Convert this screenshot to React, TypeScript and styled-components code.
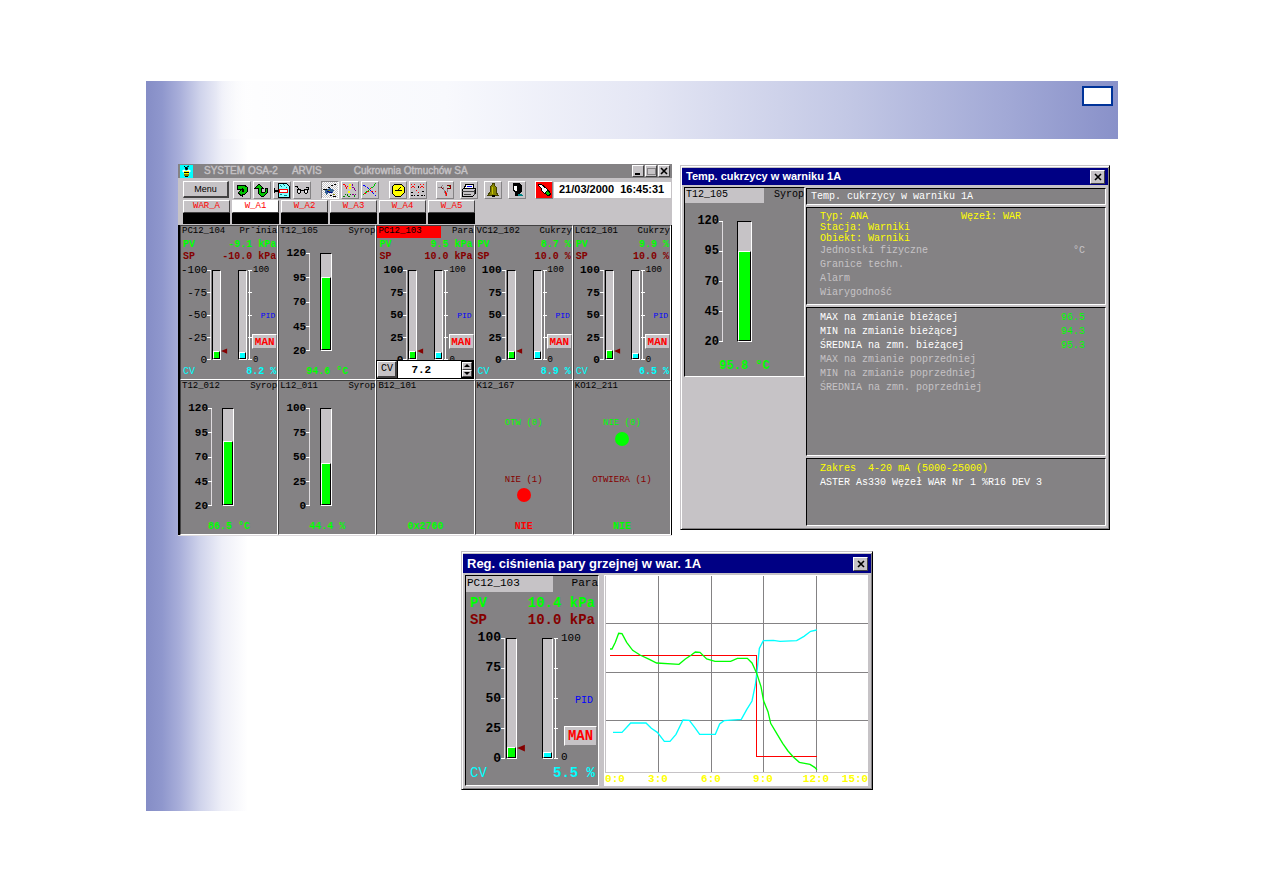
import React from "react";
import styled, { createGlobalStyle, css } from "styled-components";

const silver = "#c6c3c6";
const gray = "#848284";
const dark = "#424142";
const lime = "#00ff00";
const cyan = "#00ffff";
const maroon = "#840000";
const navy = "#000084";

const mono = '"Liberation Mono", "DejaVu Sans Mono", monospace';
const sans = '"Liberation Sans", Arial, sans-serif';

const GlobalStyle = createGlobalStyle`
  *, *::before, *::after { box-sizing: border-box; }
  body { margin: 0; background: #fff; font-family: ${mono}; }
  button, input { margin: 0; font: inherit; }
  h1, h2, h3, p, ul { margin: 0; padding: 0; font: inherit; }
  svg { display: block; flex: none; }
`;

/* ---------- slide ---------- */

const Page = styled.main`
  min-height: 100vh;
  padding: 81px 145px 82px 146px;
`;

const Slide = styled.section`
  display: flex;
  flex-direction: column;
  min-height: 730px;
  background: linear-gradient(
      90deg,
      #858dc6 0,
      #8f97cd 16px,
      #a9afda 34px,
      #cfd3eb 54px,
      #eeeff8 76px,
      #fff 102px
    )
    no-repeat;
`;

const Banner = styled.header`
  display: flex;
  justify-content: flex-end;
  height: 58px;
  padding: 5px 5px 0 0;
  background: linear-gradient(
    90deg,
    rgba(253, 253, 254, 0) 0,
    rgba(253, 253, 254, 0) 70px,
    #fdfdfe 110px,
    #f8f9fd 300px,
    #e4e6f4 500px,
    #c3c8e5 700px,
    #a2a9d6 860px,
    #8991c9 100%
  );
`;

const PageNumber = styled.div`
  width: 31px;
  height: 20px;
  border: 2px solid #003399;
  background: #fff;
`;

const Content = styled.div`
  display: flex;
  flex-direction: column;
  gap: 15px;
  padding: 25px 8px 21px 32px;
`;

const TopRow = styled.div`
  display: grid;
  grid-template-columns: minmax(0, 494fr) minmax(0, 430fr);
  align-items: start;
  gap: 8px;
`;

/* ---------- buttons ---------- */

const raised = css`
  border: 1px solid;
  border-color: #fff ${dark} ${dark} #fff;
  background: ${silver};
`;

const CaptionButton = styled.button`
  ${raised}
  display: flex;
  align-items: center;
  justify-content: center;
  width: ${(p: { $wide?: boolean }) => (p.$wide ? 15 : 12)}px;
  height: ${(p: { $wide?: boolean }) => (p.$wide ? 14 : 12)}px;
  padding: 0;
`;

const Cross = ({ size = 8 }: { size?: number }) => (
  <svg width={size} height={size} viewBox="0 0 8 8">
    <path d="M1 1l6 6M7 1l-6 6" stroke="#000" strokeWidth="1.6" />
  </svg>
);

/* ---------- main window ---------- */

const MainWindow = styled.section`
  min-width: 0;
  background: ${silver};
  border-bottom: 1px solid #dedbde;
`;

const MainTitle = styled.div`
  display: flex;
  align-items: center;
  height: 14px;
  padding: 0 2px 0 2px;
  background: ${gray};
  color: ${silver};
  font: 10px/14px ${sans};
`;

const TitlePart = styled.span`
  margin-left: ${(p: { $gap: number }) => p.$gap}px;
  -webkit-text-stroke: 0.4px ${silver};
  white-space: nowrap;
`;

const CaptionButtons = styled.div`
  display: flex;
  gap: 1px;
  margin-left: auto;
`;

const Toolbar = styled.div`
  display: flex;
  align-items: center;
  height: 22px;
  padding: 1px 1px 0 5px;
`;

const ToolGroup = styled.div`
  display: flex;
  gap: ${(p: { $gap?: number; $after?: number }) => p.$gap ?? 2}px;
  margin-right: ${(p) => p.$after ?? 10}px;
`;

const MenuButton = styled.button`
  ${raised}
  width: 46px;
  height: 17px;
  margin-right: 4px;
  padding: 0;
  border-width: 1px 2px 2px 1px;
  font: 9px/13px ${sans};
`;

const ToolButton = styled.button`
  ${raised}
  display: flex;
  align-items: center;
  justify-content: center;
  width: 18px;
  height: 18px;
  padding: 0;
  border-color: #fff ${gray} ${gray} #fff;
  ${(p: { $on?: boolean; $red?: boolean }) =>
    p.$on && `background: repeating-conic-gradient(#fff 0 25%, ${silver} 0 50%) 0 0 / 2px 2px; border-color: ${gray} #fff #fff ${gray};`}
  ${(p) => p.$red && `background: #ff0000;`}
`;

const Clock = styled.time`
  flex: 1;
  height: 16px;
  padding-left: 5px;
  background: #fff;
  color: #000;
  font: bold 11px/15px ${sans};
  white-space: pre;
`;

const Tabs = styled.nav`
  display: flex;
  gap: 2px;
  height: 25px;
  padding: 0 0 1px 5px;
`;

const Tab = styled.button`
  display: flex;
  flex-direction: column;
  width: 47px;
  padding: 0;
  border: 0;
  background: #000;
  color: #ff0000;
  font: 9px/12px ${mono};
`;

const TabLabel = styled.span`
  ${raised}
  width: 100%;
  height: 13px;
  line-height: 11px;
  ${(p: { $on?: boolean }) => p.$on && `background: #fff;`}
`;

const CellGrid = styled.div`
  display: grid;
  grid-template-columns: repeat(5, 1fr);
  grid-auto-rows: 155px;
  border: solid #000;
  border-width: 0 1px 0 2px;
`;

const Cell = styled.article`
  position: relative;
  min-width: 0;
  border: 1px solid;
  border-color: ${dark} #fff #fff ${dark};
  background: ${gray};
`;

/* ---------- instrument faceplates ---------- */

type Size = "s" | "m" | "l";
const dims = {
  s: { H: 90, head: 12, headFont: 9, row: 12, value: 10, scale: 11, labelW: 26, tube: 9, mid: 17 },
  m: { H: 120, head: 15, headFont: 10, row: 15, value: 12, scale: 12, labelW: 35, tube: 14, mid: 0 },
  l: { H: 121, head: 16, headFont: 11, row: 17, value: 14, scale: 13, labelW: 35, tube: 11, mid: 25 },
};

const Head = styled.h3<{ $size: Size }>`
  display: flex;
  justify-content: space-between;
  height: ${(p) => dims[p.$size].head}px;
  font: ${(p) => `${dims[p.$size].headFont}px/${dims[p.$size].head - 1}px ${mono}`};
  white-space: nowrap;
`;

const Tag = styled.span<{ $bg?: string }>`
  width: 66%;
  padding-left: 1px;
  background: ${(p) => p.$bg ?? "transparent"};
`;

const Values = styled.div<{ $size: Size }>`
  padding-top: ${(p) => (p.$size === "l" ? 3 : 1)}px;
`;

const ValueRow = styled.p<{ $size: Size; $color: string }>`
  display: flex;
  justify-content: space-between;
  padding: 0 ${(p) => (p.$size === "l" ? 3 : 1)}px 0 ${(p) => (p.$size === "l" ? 4 : 2)}px;
  color: ${(p) => p.$color};
  font: ${(p) => `bold ${dims[p.$size].value}px/${dims[p.$size].row}px ${mono}`};
  white-space: pre;
`;

const PlainLabel = styled.span`
  font-weight: normal;
`;

const GaugeBody = styled.div<{ $h: number; $top: number }>`
  display: flex;
  height: ${(p) => p.$h + 12}px;
  margin-top: ${(p) => p.$top}px;
`;

const Scale = styled.ul<{ $w: number; $font: number; $thin?: boolean }>`
  display: flex;
  flex-direction: column;
  justify-content: space-between;
  width: ${(p) => p.$w}px;
  list-style: none;
  text-align: right;
  font: ${(p) => `${p.$thin ? "normal" : "bold"} ${p.$font}px/12px ${mono}`};
  white-space: nowrap;
`;

const Tube = styled.div<{ $w: number; $h: number }>`
  display: flex;
  align-items: flex-end;
  flex: none;
  width: ${(p) => p.$w}px;
  height: ${(p) => p.$h}px;
  margin-top: 6px;
  border: 1px solid;
  border-color: #000 #fff #fff #000;
  background: ${silver};
`;

const Fill = styled.div<{ $color: string }>`
  width: 100%;
  border: 1px solid;
  border-color: #fff #000 #000 #fff;
  background: ${(p) => p.$color};
`;

const Ticks = ({ h, right }: { h: number; right?: boolean }) => (
  <svg width="5" height={h + 12} viewBox={`0 0 5 ${h + 12}`} shapeRendering="crispEdges">
    <path d={`M${right ? 2 : 3} 6v${h}`} stroke={right ? "#fff" : "#dedbde"} strokeWidth="1" transform="translate(.5 0)" />
    {[0, 1, 2, 3, 4].map((i) => (
      <rect key={i} x={right ? 1 : 0} y={6 + Math.round((i * (h - 1)) / 4)} width="4" height="1" fill="#fff" />
    ))}
  </svg>
);

const Middle = styled.div<{ $w: number; $h: number }>`
  display: flex;
  align-items: flex-end;
  width: ${(p) => p.$w}px;
  height: ${(p) => p.$h + 6}px;
  padding-bottom: ${(p) => (p.$h > 100 ? 7 : 6)}px;
`;

const RightSide = styled.div<{ $size: Size }>`
  display: flex;
  flex-direction: column;
  flex: 1;
  font: ${(p) => `${p.$size === "l" ? 11 : 9}px/12px ${mono}`};
`;

const RightLabel = styled.span`
  padding-left: ${(p: { $size: Size }) => (p.$size === "l" ? 3 : 1)}px;
`;

const Mode = styled.span<{ $size: Size }>`
  align-self: flex-end;
  margin-top: ${(p) => (p.$size === "l" ? 51 : 34)}px;
  margin-right: ${(p) => (p.$size === "l" ? 5 : 2)}px;
  color: #0000ff;
  font-size: ${(p) => (p.$size === "l" ? 10 : 8)}px;
`;

const ManButton = styled.button<{ $size: Size }>`
  ${raised}
  align-self: flex-end;
  width: ${(p) => (p.$size === "l" ? 33 : 25)}px;
  height: ${(p) => (p.$size === "l" ? 20 : 15)}px;
  margin: ${(p) => (p.$size === "l" ? "19px 1px 5px 0" : "12px 0 5px 0")};
  padding: 0;
  border-color: #fff ${gray} ${gray} #fff;
  color: #ff0000;
  font: bold ${(p) => (p.$size === "l" ? "14px/16px" : "11px/12px")} ${mono};
`;

type LoopProps = {
  size: Size;
  tag: string;
  name: string;
  bg?: string;
  unit: string;
  pv: string;
  sp: string;
  cv?: string;
  scale?: string[];
  pvFill: number;
  cvFill: number;
};

const percent = ["100", "75", "50", "25", "0"];

function Loop({ size, tag, name, bg, unit, pv, sp, cv, scale = percent, pvFill, cvFill }: LoopProps) {
  const d = dims[size];
  const big = size === "l";
  return (
    <>
      <Head $size={size}>
        <Tag $bg={bg}>{tag}</Tag>
        <span>{name}</span>
      </Head>
      <Values $size={size}>
        <ValueRow $size={size} $color={lime}>
          <span>PV</span>
          <span>{`${pv} ${unit}`}</span>
        </ValueRow>
        <ValueRow $size={size} $color={maroon}>
          <span>SP</span>
          <span>{`${sp} ${unit}`}</span>
        </ValueRow>
      </Values>
      <GaugeBody $h={d.H} $top={big ? 3 : 1}>
        <Scale $w={d.labelW} $font={d.scale} $thin={scale !== percent}>
          {scale.map((s) => (
            <li key={s}>{s}</li>
          ))}
        </Scale>
        <Ticks h={d.H} />
        <Tube $w={d.tube} $h={d.H}>
          <Fill $color={lime} style={{ height: `${pvFill}%` }} />
        </Tube>
        <Middle $w={d.mid} $h={d.H}>
          <svg width={big ? 9 : 7} height={big ? 8 : 6} viewBox="0 0 8 6">
            <path d="M0 3l7-3v6z" fill={maroon} />
          </svg>
        </Middle>
        <Tube $w={d.tube} $h={d.H}>
          <Fill $color={cyan} style={{ height: `${cvFill}%` }} />
        </Tube>
        <Ticks h={d.H} right />
        <RightSide $size={size}>
          <RightLabel $size={size}>100</RightLabel>
          <Mode $size={size}>PID</Mode>
          <ManButton $size={size}>MAN</ManButton>
          <RightLabel $size={size}>0</RightLabel>
        </RightSide>
      </GaugeBody>
      {cv && (
        <ValueRow $size={size} $color={cyan}>
          <PlainLabel>CV</PlainLabel>
          <span>{`${cv} %`}</span>
        </ValueRow>
      )}
    </>
  );
}

const Reading = styled.p<{ $size: Size; $color?: string }>`
  color: ${(p) => p.$color ?? lime};
  font: ${(p) => `bold ${p.$size === "m" ? 12 : 10}px/12px ${mono}`};
  text-align: center;
  white-space: pre;
`;

const SensorGauge = styled(GaugeBody)`
  margin-bottom: ${(p) => (p.$h > 100 ? 12 : 9)}px;
`;

const TubeSlot = styled.div`
  padding-left: ${(p: { $size: Size }) => (p.$size === "m" ? 13 : 9)}px;
`;

type SensorProps = { size: Size; tag: string; name: string; bg?: string; scale: string[]; value: string; fill: number };

function Sensor({ size, tag, name, bg, scale, value, fill }: SensorProps) {
  const big = size === "m";
  const h = big ? 121 : 98;
  return (
    <>
      <Head $size={size}>
        <Tag $bg={bg}>{tag}</Tag>
        <span>{name}</span>
      </Head>
      <SensorGauge $h={h} $top={big ? 12 : 9}>
        <Scale $w={big ? 34 : 27} $font={big ? 12 : 11}>
          {scale.map((s) => (
            <li key={s}>{s}</li>
          ))}
        </Scale>
        <Ticks h={h} />
        <TubeSlot $size={size}>
          <Tube $w={big ? 15 : 12} $h={h}>
            <Fill $color={lime} style={{ height: `${fill}%` }} />
          </Tube>
        </TubeSlot>
      </SensorGauge>
      <Reading $size={size}>{value}</Reading>
    </>
  );
}

/* ---------- two-state signals ---------- */

const StateStack = styled.div`
  display: flex;
  flex-direction: column;
  align-items: center;
  padding-top: 24px;
  font: 9px/12px ${mono};
`;

const StateSlot = styled.div<{ $color: string; $h: number }>`
  height: ${(p) => p.$h}px;
  color: ${(p) => p.$color};
`;

const Lamp = styled.div<{ $color: string; $gap: number }>`
  width: 14px;
  height: 14px;
  margin: ${(p) => p.$gap}px auto 0;
  border-radius: 50%;
  background: ${(p) => p.$color};
`;

const CvEditor = styled.div`
  position: absolute;
  left: -1px;
  right: 0;
  bottom: 0;
  display: flex;
  height: 19px;
  border: 1px solid #000;
  background: #fff;
`;

const CvButton = styled.button`
  ${raised}
  width: 20px;
  padding: 0;
  border-width: 1px 2px 2px 1px;
  font: 10px/12px ${mono};
`;

const CvInput = styled.input`
  flex: 1;
  min-width: 0;
  padding: 0 0 0 13px;
  border: 0;
  border-left: 1px solid #000;
  font: bold 11px/14px ${mono};
`;

const Spinner = styled.div`
  display: flex;
  flex-direction: column;
  width: 12px;
  border: 1px solid #000;
`;

const SpinButton = styled.button`
  ${raised}
  display: flex;
  align-items: center;
  justify-content: center;
  flex: 1;
  padding: 0;
`;

/* ---------- toolbar icons ---------- */

const Icon = ({ children }: { children: React.ReactNode }) => (
  <svg width="16" height="16" viewBox="0 0 16 16" fill="none" shapeRendering="crispEdges">
    {children}
  </svg>
);

const BeeIcon = () => (
  <svg width="13" height="13" viewBox="0 0 13 13">
    <rect width="13" height="13" fill={cyan} />
    <path d="M4 1l2 2M9 1L7 2" stroke="#000" strokeWidth="1" />
    <path d="M2 6q2-3 4 0q3-3 5 0l-2 2H4z" fill="#fff" />
    <circle cx="6.500" cy="3.500" r="1.500" fill="#000" />
    <rect x="4" y="6" width="5" height="5" fill="#ffff00" />
    <path d="M4 7.500h5M4 10h5M5 11.500h3" stroke="#000" />
  </svg>
);

const BackIcon = () => (
  <Icon>
    <path d="M3 3h7l3 2v5l-2 2H8v2l-4-3 4-4v2h1V7H3z" fill="#00c300" stroke="#000" />
  </Icon>
);
const UpIcon = () => (
  <Icon>
    <path d="M5 2l4 4H7v4l2 1 2-1V6h2v5l-3 3H7l-3-3V6H1z" fill="#00c300" stroke="#000" />
  </Icon>
);
const ScreenIcon = () => (
  <Icon>
    <path d="M4 1h8l3 3v11H4z" fill="#84ffff" stroke="#000" />
    <path d="M6 3l2 2M9 2l2 2M6 12h2M10 13h3M12 5v1" stroke="#008284" />
    <rect x="5" y="7" width="8" height="3" fill="#fff" stroke="#ff0000" />
    <path d="M0 6v5M0 8.500h4" stroke="#000" strokeWidth="2" />
  </Icon>
);
const GlassesIcon = () => (
  <Icon>
    <path d="M1 4h2l2 4M3 7h3l1 2-1 2H4L3 9zM10 7h3l1 2-1 2h-2l-1-2zM7 8h3M12 5h2v3" stroke="#000" />
    <path d="M4 9h2v1H4zM11 9h2v1h-2z" fill="#fff" />
  </Icon>
);
const BirdIcon = () => (
  <Icon>
    <path d="M3 8l5-2 4 2-1 3H7L4 13z" fill="#316194" />
    <path d="M1 7h4M6 5h2M9 3h2M12 2h2M8 13h2M11 14h3" stroke="#000" />
    <path d="M6 8h2M11 12h2" stroke="#848200" />
    <path d="M7 10h3M5 9h2" stroke={navy} />
  </Icon>
);
const CurvesIcon = () => (
  <Icon>
    <path d="M1 2h2v2h1v2h2M5 4h1" stroke="#ff0000" strokeDasharray="2 1" />
    <path d="M1 14h2v-2h2v2h3v-2h4v2h2" stroke="#008200" strokeDasharray="2 1" />
    <path d="M8 2v5M7 9v3" stroke="#ffff00" strokeWidth="2" strokeDasharray="2 1" />
    <path d="M10 2v3h2v3h2M10 12h4" stroke="#840084" strokeDasharray="2 1" />
  </Icon>
);
const CrossCurvesIcon = () => (
  <Icon>
    <path d="M1 3l4 2 4 4 5 5" stroke="#0000ff" strokeDasharray="3 1" />
    <path d="M14 1l-3 4-4 3-6 5" stroke="#00c300" strokeDasharray="3 1" />
    <path d="M2 12l5-3 7 1M8 6l3 3" stroke="#ff0000" strokeDasharray="2 2" />
  </Icon>
);
const ClockIcon = () => (
  <Icon>
    <path d="M5 2h6l3 3v6l-3 3H5l-3-3V5z" fill="#ffff00" stroke="#000" />
    <path d="M8 8l3-3M5 8h7" stroke="#000" />
  </Icon>
);
const PointsIcon = () => (
  <Icon>
    <path d="M1 2l4 4M5 2L1 6M10 2l4 4M14 2l-4 4M6 8l3 3" stroke="#ff0000" strokeDasharray="2 1" />
    <path d="M1 10h3M1 13h4M8 4v2M7 13h3M12 9h2M11 13h4" stroke="#000" strokeDasharray="2 1" />
  </Icon>
);
const ToolsIcon = () => (
  <Icon>
    <path d="M1 5h3l2-2M6 5l3 9 2-8" stroke="#848284" />
    <path d="M8 9l2 5" stroke="#ff0000" />
    <path d="M10 3h3v3h-3M4 5l2 2" stroke="#840000" />
    <path d="M12 4h1" stroke="#00c300" />
  </Icon>
);
const PrinterIcon = () => (
  <Icon>
    <path d="M5 2h8l-1 5H3z" fill="#fff" stroke="#000" />
    <path d="M6 4h5M6 6h4" stroke="#0000ff" />
    <path d="M1 8l2-2h11v6l-2 2H1z" fill="#c6c3c6" stroke="#000" />
    <path d="M1 9h12M3 12h7M13 8v5" stroke="#424142" />
  </Icon>
);
const BellIcon = () => (
  <Icon>
    <path d="M7 1h2v2l2 2v5l2 3H3l2-3V5l2-2z" fill="#848200" stroke="#424100" />
    <path d="M7 5v7" stroke="#c6c300" />
    <path d="M7 14h3" stroke="#000" strokeWidth="2" />
  </Icon>
);
const UserIcon = () => (
  <Icon>
    <path d="M4 1h7l2 3v5l-2 2v3H6v-3L4 9z" fill="#000" />
    <path d="M5 4h3v5H6L5 7z" fill="#fff" />
    <path d="M9 12h3l2 2H9z" fill="#008284" />
  </Icon>
);
const HandIcon = () => (
  <Icon>
    <path d="M2 3l3-1 6 5 2 3-4 2-3-3-1-3z" fill="#fff" stroke="#000" />
    <path d="M9 11l3-3 3 4-3 2z" fill="#00c300" stroke="#000" />
  </Icon>
);

/* ---------- dialogs ---------- */

const Dialog = styled.section<{ $info?: boolean }>`
  ${(p) => (p.$info ? "min-width: 0; margin-top: 1px;" : "width: 412px; margin-left: 283px;")}
  padding: 2px 1px 1px;
  border: 1px solid;
  border-color: ${silver} #000 #000 ${silver};
  background: ${silver};
  box-shadow: inset 1px 1px #fff, inset -1px -1px ${gray};
`;

const DialogTitle = styled.div<{ $tall?: boolean }>`
  display: flex;
  align-items: center;
  justify-content: space-between;
  height: ${(p) => (p.$tall ? 19 : 17)}px;
  margin: 0 0 2px;
  padding: 0 3px 0 4px;
  background: ${navy};
  color: #fff;
  font: bold ${(p) => (p.$tall ? 13 : 11)}px/17px ${sans};
`;

const InfoBody = styled.div`
  display: grid;
  grid-template-columns: 121px 1fr;
  gap: 1px;
  align-items: start;
  padding: 0 2px 2px;
`;

const sunken = css`
  border: 1px solid;
  border-color: #000 #fff #fff #000;
  background: ${gray};
`;

const SidePanel = styled.article<{ $h: number }>`
  ${sunken}
  height: ${(p) => p.$h}px;
`;

const InfoStack = styled.div`
  display: flex;
  flex-direction: column;
  gap: 2px;
  padding-top: 1px;
  color: #fff;
  font: 10px/14px ${mono};
`;

const Box = styled.div<{ $h: number }>`
  ${sunken}
  height: ${(p) => p.$h}px;
  padding: ${(p) => (p.$h < 20 ? "1px 4px" : "3px 20px 0 13px")};
`;

const Line = styled.p<{ $color?: string; $lh?: number }>`
  display: flex;
  justify-content: space-between;
  color: ${(p) => p.$color ?? "#fff"};
  line-height: ${(p) => p.$lh ?? 14}px;
  white-space: pre;
`;

const NodeName = styled.span`
  flex: 0 0 124px;
`;

const Green = styled.span`
  color: ${lime};
`;

const TrendBody = styled.div`
  display: grid;
  grid-template-columns: 134px 1fr;
  gap: 4px;
  padding: 0 3px 2px 2px;
`;

const TrendPlot = styled.div`
  height: 211px;
  overflow: hidden;
  background: #fff;
  border-left: 1px solid ${silver};
`;

const TimeLabel = styled.text`
  fill: #ffff00;
  font: bold 11px ${mono};
  text-anchor: middle;
`;

const times: [number, string][] = [
  [11, "0:0"],
  [54, "3:0"],
  [107, "6:0"],
  [159, "9:0"],
  [212, "12:0"],
  [251, "15:0"],
];

const Trend = () => (
  <svg width="265" height="211" viewBox="0 0 265 211" fill="none">
    <g shapeRendering="crispEdges" stroke={gray}>
      <path d="M54 0v197M107 0v197M159 0v197M212 0v197M1 48h264M1 97h264M1 145h264" transform="translate(.5 .5)" />
      <path d="M1 197h264M1 0v197" stroke={silver} transform="translate(.5 .5)" />
    </g>
    <path d="M6 80.500H152.500V181.500H213" stroke="#ff0000" shapeRendering="crispEdges" />
    <g transform="scale(.33333) translate(-12 -90)" strokeWidth="4">
      <path
        stroke={cyan}
        d="M39 562H66L92 534H138L154 550L172 562L193 589H210L228 568L249 525L268 526L284 547L299 568H346L359 537L372 527L424 523L440 494L456 468L466 420L472 370L478 310L490 287L520 286L540 289L590 287L612 274L632 259L650 255"
      />
      <path
        stroke={lime}
        d="M30 312H36L46 292L56 265L66 266L80 292L98 316L120 330L148 343L170 354L237 358L256 342L274 330L286 321L300 322L320 342L345 349H392L412 340H442L456 354L470 385L483 425L491 468L504 500L512 535L530 565L548 595L564 618L580 636L598 652L630 658L644 667L651 674"
      />
    </g>
    {times.map(([x, label]) => (
      <TimeLabel key={label} x={x} y="207">
        {label}
      </TimeLabel>
    ))}
  </svg>
);

const tabs = ["WAR_A", "W_A1", "W_A2", "W_A3", "W_A4", "W_A5"];
const temp = ["120", "95", "70", "45", "20"];

export default function App() {
  return (
    <>
      <GlobalStyle />
      <Page>
        <Slide>
          <Banner>
            <PageNumber />
          </Banner>
          <Content>
            <TopRow>
              <MainWindow>
                <MainTitle>
                  <BeeIcon />
                  <TitlePart $gap={11}>SYSTEM OSA-2</TitlePart>
                  <TitlePart $gap={14}>ARVIS</TitlePart>
                  <TitlePart $gap={32}>Cukrownia Otmuchów SA</TitlePart>
                  <CaptionButtons>
                    <CaptionButton aria-label="Minimize">
                      <svg width="8" height="8" viewBox="0 0 8 8">
                        <path d="M1 7h5" stroke="#000" strokeWidth="2" />
                      </svg>
                    </CaptionButton>
                    <CaptionButton aria-label="Maximize">
                      <svg width="9" height="8" viewBox="0 0 9 8" fill="none" shapeRendering="crispEdges">
                        <path d="M0 1.500h8M.5 1v7M8.500 1v7M0 7.500h9" stroke={gray} />
                      </svg>
                    </CaptionButton>
                    <CaptionButton aria-label="Close">
                      <Cross />
                    </CaptionButton>
                  </CaptionButtons>
                </MainTitle>
                <Toolbar>
                  <MenuButton>Menu</MenuButton>
                  <ToolGroup>
                    <ToolButton aria-label="Back"><BackIcon /></ToolButton>
                    <ToolButton aria-label="Up"><UpIcon /></ToolButton>
                    <ToolButton aria-label="Screen"><ScreenIcon /></ToolButton>
                    <ToolButton aria-label="Preview"><GlassesIcon /></ToolButton>
                  </ToolGroup>
                  <ToolGroup>
                    <ToolButton aria-label="Groups" $on><BirdIcon /></ToolButton>
                    <ToolButton aria-label="Trends"><CurvesIcon /></ToolButton>
                    <ToolButton aria-label="Charts"><CrossCurvesIcon /></ToolButton>
                  </ToolGroup>
                  <ToolGroup $after={9}>
                    <ToolButton aria-label="Time"><ClockIcon /></ToolButton>
                    <ToolButton aria-label="Points"><PointsIcon /></ToolButton>
                  </ToolGroup>
                  <ToolGroup $gap={6} $after={9}>
                    <ToolButton aria-label="Tools"><ToolsIcon /></ToolButton>
                    <ToolButton aria-label="Print"><PrinterIcon /></ToolButton>
                    <ToolButton aria-label="Alarms"><BellIcon /></ToolButton>
                    <ToolButton aria-label="User"><UserIcon /></ToolButton>
                  </ToolGroup>
                  <ToolGroup $after={1}>
                    <ToolButton aria-label="Acknowledge" $red><HandIcon /></ToolButton>
                  </ToolGroup>
                  <Clock>21/03/2000  16:45:31</Clock>
                </Toolbar>
                <Tabs>
                  {tabs.map((t) => (
                    <Tab key={t}>
                      <TabLabel $on={t === "W_A1"}>{t}</TabLabel>
                    </Tab>
                  ))}
                </Tabs>
                <CellGrid>
                  <Cell>
                    <Loop size="s" tag="PC12_104" name="Pr˘ínia" unit="kPa" pv="-9.1" sp="-10.0" cv="8.2" scale={["-100", "-75", "-50", "-25", "0"]} pvFill={9} cvFill={8} />
                  </Cell>
                  <Cell>
                    <Sensor size="s" tag="T12_105" name="Syrop" scale={temp} value="94.6 °C" fill={76} />
                  </Cell>
                  <Cell>
                    <Loop size="s" tag="PC12_103" name="Para" bg="#ff0000" unit="kPa" pv="9.5" sp="10.0" pvFill={9} cvFill={8} />
                    <CvEditor>
                      <CvButton>CV</CvButton>
                      <CvInput aria-label="CV" defaultValue="7.2" />
                      <Spinner>
                        <SpinButton aria-label="Increase">
                          <svg width="6" height="3" viewBox="0 0 6 3"><path d="M0 3l3-3 3 3z" /></svg>
                        </SpinButton>
                        <SpinButton aria-label="Decrease">
                          <svg width="6" height="3" viewBox="0 0 6 3"><path d="M0 0l3 3 3-3z" /></svg>
                        </SpinButton>
                      </Spinner>
                    </CvEditor>
                  </Cell>
                  <Cell>
                    <Loop size="s" tag="VC12_102" name="Cukrzy" unit="%" pv="8.7" sp="10.0" cv="8.9" pvFill={9} cvFill={9} />
                  </Cell>
                  <Cell>
                    <Loop size="s" tag="LC12_101" name="Cukrzy" unit="%" pv="9.9" sp="10.0" cv="6.5" pvFill={10} cvFill={7} />
                  </Cell>
                  <Cell>
                    <Sensor size="s" tag="T12_012" name="Syrop" scale={temp} value="86.5 °C" fill={67} />
                  </Cell>
                  <Cell>
                    <Sensor size="s" tag="L12_011" name="Syrop" scale={percent} value="44.4 %" fill={44} />
                  </Cell>
                  <Cell>
                    <Head $size="s"><Tag>B12_101</Tag></Head>
                    <StateStack>
                      <StateSlot $color={lime} $h={104} />
                      <Reading $size="s">0x2760</Reading>
                    </StateStack>
                  </Cell>
                  <Cell>
                    <Head $size="s"><Tag>K12_167</Tag></Head>
                    <StateStack>
                      <StateSlot $color={lime} $h={57}>OTW (0)</StateSlot>
                      <StateSlot $color={maroon} $h={47}>
                        NIE (1)
                        <Lamp $color="#ff0000" $gap={2} />
                      </StateSlot>
                      <Reading $size="s" $color="#ff0000">NIE</Reading>
                    </StateStack>
                  </Cell>
                  <Cell>
                    <Head $size="s"><Tag>KO12_211</Tag></Head>
                    <StateStack>
                      <StateSlot $color={lime} $h={57}>
                        NIE (0)
                        <Lamp $color={lime} $gap={3} />
                      </StateSlot>
                      <StateSlot $color={maroon} $h={47}>OTWIERA (1)</StateSlot>
                      <Reading $size="s">NIE</Reading>
                    </StateStack>
                  </Cell>
                </CellGrid>
              </MainWindow>

              <Dialog $info>
                <DialogTitle>
                  <h2>Temp. cukrzycy w warniku 1A</h2>
                  <CaptionButton $wide aria-label="Close"><Cross /></CaptionButton>
                </DialogTitle>
                <InfoBody>
                  <SidePanel $h={190}>
                    <Sensor size="m" tag="T12_105" name="Syrop" bg={silver} scale={temp} value="95.8 °C" fill={76} />
                  </SidePanel>
                  <InfoStack>
                    <Box $h={17}>
                      <Line>Temp. cukrzycy w warniku 1A</Line>
                    </Box>
                    <Box $h={98}>
                      <Line $color="#ffff00" $lh={11}>
                        <span>Typ: ANA</span>
                        <NodeName>Węzeł: WAR</NodeName>
                      </Line>
                      <Line $color="#ffff00" $lh={11}>Stacja: Warniki</Line>
                      <Line $color="#ffff00" $lh={11}>Obiekt: Warniki</Line>
                      <Line $color={silver}>
                        <span>Jednostki fizyczne</span>
                        <span>°C</span>
                      </Line>
                      <Line $color={silver}>Granice techn.</Line>
                      <Line $color={silver}>Alarm</Line>
                      <Line $color={silver}>Wiarygodność</Line>
                    </Box>
                    <Box $h={149}>
                      {[
                        ["MAX na zmianie bieżącej", "96.5"],
                        ["MIN na zmianie bieżącej", "94.3"],
                        ["ŚREDNIA na zmn. bieżącej", "95.3"],
                      ].map(([label, value]) => (
                        <Line key={label}>
                          <span>{label}</span>
                          <Green>{value}</Green>
                        </Line>
                      ))}
                      <Line $color={silver}>MAX na zmianie poprzedniej</Line>
                      <Line $color={silver}>MIN na zmianie poprzedniej</Line>
                      <Line $color={silver}>ŚREDNIA na zmn. poprzedniej</Line>
                    </Box>
                    <Box $h={68}>
                      <Line $color="#ffff00">{"Zakres  4-20 mA (5000-25000)"}</Line>
                      <Line>ASTER As330 Węzeł WAR Nr 1 %R16 DEV 3</Line>
                    </Box>
                  </InfoStack>
                </InfoBody>
              </Dialog>
            </TopRow>

            <Dialog>
              <DialogTitle $tall>
                <h2>Reg. ciśnienia pary grzejnej w war. 1A</h2>
                <CaptionButton $wide aria-label="Close"><Cross /></CaptionButton>
              </DialogTitle>
              <TrendBody>
                <SidePanel $h={211}>
                  <Loop size="l" tag="PC12_103" name="Para" bg={silver} unit="kPa" pv="10.4" sp="10.0" cv="5.5" pvFill={9} cvFill={5} />
                </SidePanel>
                <TrendPlot>
                  <Trend />
                </TrendPlot>
              </TrendBody>
            </Dialog>
          </Content>
        </Slide>
      </Page>
    </>
  );
}
